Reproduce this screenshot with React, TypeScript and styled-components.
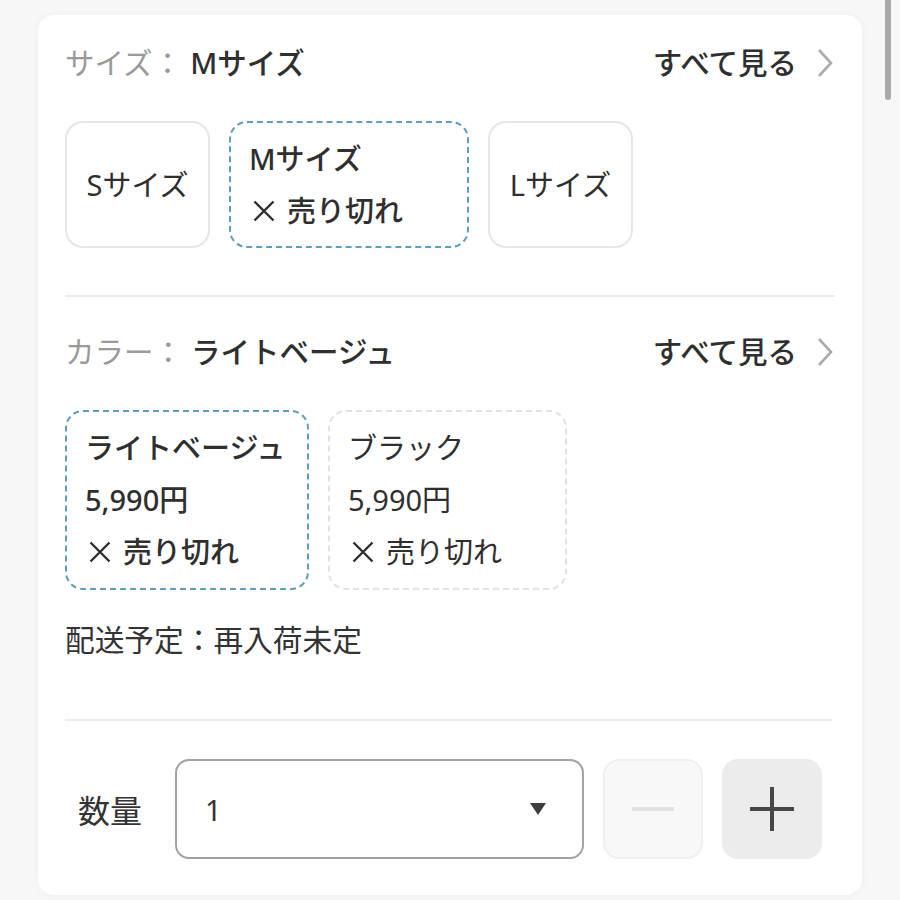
import React from "react"
import styled, { createGlobalStyle } from "styled-components"

const GlobalStyle = createGlobalStyle`
  html, body {
    margin: 0;
    padding: 0;
    background: #f7f7f7;
    font-family: "Noto Sans", "Noto Sans CJK JP", sans-serif;
    color: #333;
  }
`

const Page = styled.div`
  position: relative;
  width: 900px;
  height: 900px;
  overflow: hidden;
  padding: 15px 0 0 38px;
  box-sizing: border-box;
`

const ScrollThumb = styled.div`
  position: absolute;
  top: -6px;
  right: 9px;
  width: 6px;
  height: 106px;
  border-radius: 3px;
  background: #a9a9a9;
`

const Card = styled.div`
  width: 824px;
  background: #fff;
  border-radius: 16px;
  box-shadow: 0 0 10px rgba(0, 0, 0, 0.04);
  padding: 28px 27px 36px;
  box-sizing: border-box;
`

const Section = styled.div`
  padding-bottom: 47px;
  border-bottom: 2px solid #ebebeb;
  margin-bottom: 35px;
`

const HeaderRow = styled.div`
  display: flex;
  align-items: center;
  justify-content: space-between;
  height: 40px;
  font-size: 29.5px;
  line-height: 40px;
`

const Label = styled.span`
  color: #9a9a9a;
`

const Colon = styled.span`
  color: #9a9a9a;
  margin-right: 8px;
`

const Value = styled.span`
  font-weight: 500;
  color: #2f2f2f;
`

const SeeAll = styled.div`
  display: flex;
  align-items: center;
  gap: 18px;
  font-weight: 500;
  color: #2f2f2f;
`

const ChipRow = styled.div`
  display: flex;
  gap: 19px;
  margin-top: 38px;
`

const Chip = styled.div<{ $w: number; $h: number; $state: "plain" | "selected" | "muted"; $center?: boolean }>`
  width: ${(p) => p.$w}px;
  height: ${(p) => p.$h}px;
  box-sizing: border-box;
  border-radius: 18px;
  border: 2px ${(p) => (p.$state === "plain" ? "solid" : "dashed")}
    ${(p) => (p.$state === "selected" ? "#5d9ec0" : p.$state === "muted" ? "#e2e2e2" : "#e6e6e6")};
  padding: ${(p) => (p.$center ? "0" : "10px 18px")};
  display: flex;
  flex-direction: column;
  justify-content: ${(p) => (p.$center ? "center" : "flex-start")};
  align-items: ${(p) => (p.$center ? "center" : "flex-start")};
  font-size: 29px;
  line-height: 52px;
  font-weight: ${(p) => (p.$state === "selected" ? 500 : 400)};
  color: #2f2f2f;
  white-space: nowrap;
`

const SoldOut = styled.div`
  display: flex;
  align-items: center;
  gap: 12px;
  padding-left: 4px;
`

const Delivery = styled.div`
  font-size: 29.7px;
  line-height: 40px;
  margin-top: 30px;
  padding-bottom: 59px;
  border-bottom: 2px solid #ededed;
  margin-right: 3px;
`

const QtyRow = styled.div`
  display: flex;
  align-items: center;
  gap: 19px;
  margin-top: 38px;
  padding-left: 13px;
`

const QtyLabel = styled.div`
  font-size: 32px;
  width: 78px;
`

const Select = styled.div`
  width: 409px;
  height: 100px;
  flex-shrink: 0;
  box-sizing: border-box;
  border: 2px solid #a3a3a3;
  border-radius: 14px;
  display: flex;
  align-items: center;
  justify-content: space-between;
  padding: 0 36px 0 28px;
  font-size: 29px;
`

const StepButton = styled.div<{ $disabled?: boolean }>`
  width: 100px;
  height: 100px;
  flex-shrink: 0;
  box-sizing: border-box;
  border-radius: 16px;
  border: 2px solid ${(p) => (p.$disabled ? "#efefef" : "#ececec")};
  background: ${(p) => (p.$disabled ? "#f8f8f8" : "#ececec")};
  display: flex;
  align-items: center;
  justify-content: center;
`

const Chevron = () => (
  <svg width="20" height="32" viewBox="0 0 20 32">
    <path d="M4 3 L16 16 L4 29" fill="none" stroke="#ababab" strokeWidth="2.6" />
  </svg>
)

const Cross = () => (
  <svg width="22" height="22" viewBox="0 0 22 22">
    <path d="M1.5 1.5 L20.5 20.5 M20.5 1.5 L1.5 20.5" stroke="#2f2f2f" strokeWidth="2.4" fill="none" />
  </svg>
)

const SeeAllLink = () => (
  <SeeAll>
    すべて見る
    <Chevron />
  </SeeAll>
)

export default function App() {
  return (
    <>
      <GlobalStyle />
      <Page>
        <ScrollThumb />
        <Card>
          <Section>
            <HeaderRow>
              <div>
                <Label>サイズ</Label>
                <Colon>：</Colon>
                <Value>Mサイズ</Value>
              </div>
              <SeeAllLink />
            </HeaderRow>
            <ChipRow>
              <Chip $w={145} $h={127} $state="plain" $center>
                Sサイズ
              </Chip>
              <Chip $w={240} $h={127} $state="selected">
                <div>Mサイズ</div>
                <SoldOut>
                  <Cross />
                  売り切れ
                </SoldOut>
              </Chip>
              <Chip $w={145} $h={127} $state="plain" $center>
                Lサイズ
              </Chip>
            </ChipRow>
          </Section>

          <HeaderRow>
            <div>
              <Label>カラー</Label>
              <Colon>：</Colon>
              <Value>ライトベージュ</Value>
            </div>
            <SeeAllLink />
          </HeaderRow>
          <ChipRow>
            <Chip $w={244} $h={180} $state="selected">
              <div>ライトベージュ</div>
              <div>5,990円</div>
              <SoldOut>
                <Cross />
                売り切れ
              </SoldOut>
            </Chip>
            <Chip $w={239} $h={180} $state="muted">
              <div>ブラック</div>
              <div>5,990円</div>
              <SoldOut>
                <Cross />
                売り切れ
              </SoldOut>
            </Chip>
          </ChipRow>

          <Delivery>配送予定：再入荷未定</Delivery>

          <QtyRow>
            <QtyLabel>数量</QtyLabel>
            <Select>
              <span>1</span>
              <svg width="16" height="12" viewBox="0 0 16 12">
                <path d="M0 0 H16 L8 12 Z" fill="#3e3e3e" />
              </svg>
            </Select>
            <StepButton $disabled>
              <svg width="42" height="6" viewBox="0 0 42 6">
                <rect x="0" y="1" width="42" height="4" fill="#e2e2e2" />
              </svg>
            </StepButton>
            <StepButton>
              <svg width="44" height="44" viewBox="0 0 44 44">
                <rect x="0" y="20" width="44" height="4" fill="#474747" />
                <rect x="20" y="0" width="4" height="44" fill="#474747" />
              </svg>
            </StepButton>
          </QtyRow>
        </Card>
      </Page>
    </>
  )
}
